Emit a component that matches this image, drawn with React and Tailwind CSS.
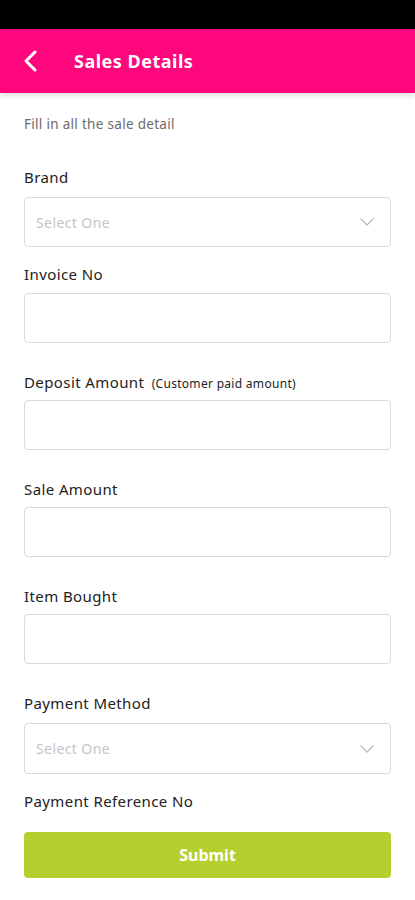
import React from "react";

const font = { fontFamily: '"Noto Sans", "Open Sans", sans-serif' };

function Chevron() {
  return (
    <svg width="18" height="18" viewBox="0 0 24 24" fill="none" stroke="#b8b8b8" strokeWidth="1.6" strokeLinecap="round" strokeLinejoin="round">
      <path d="M4 8l8 8 8-8" />
    </svg>
  );
}

function Select({ className }) {
  return (
    <div className={`flex items-center justify-between h-[50px] border border-[#d9d9d9] rounded-[4px] pl-[11px] pr-[14px] ${className}`}>
      <span className="text-[14px] tracking-[0.4px] text-[#c4c4c4]">Select One</span>
      <Chevron />
    </div>
  );
}

function Input({ className }) {
  return <div className={`h-[50px] border border-[#d9d9d9] rounded-[4px] ${className}`} />;
}

function Label({ children, className }) {
  return <div className={`h-[20px] leading-[20px] text-[15px] tracking-[0.4px] text-[#222] ${className}`}>{children}</div>;
}

export default function App() {
  return (
    <div className="w-[415px] h-[900px] bg-white overflow-hidden" style={font}>
      <div className="h-[29px] bg-black" />
      <div className="h-[64px] bg-[#ff077c] flex items-center shadow-[0_3px_6px_rgba(0,0,0,0.12)] relative">
        <div className="w-[74px] pl-[20px] flex items-center">
          <svg width="22" height="24" viewBox="0 0 22 24" fill="none" stroke="white" strokeWidth="3" strokeLinecap="round" strokeLinejoin="round">
            <path d="M15 3L6 12l9 9" />
          </svg>
        </div>
        <span className="text-white font-bold text-[18px] tracking-[0.5px]">Sales Details</span>
      </div>
      <div className="px-[24px]">
        <div className="mt-[21px] h-[20px] leading-[20px] text-[13.5px] tracking-[0.3px] text-[#6b6b6b]">Fill in all the sale detail</div>
        <Label className="mt-[33px]">Brand</Label>
        <Select className="mt-[10px]" />
        <Label className="mt-[17px]">Invoice No</Label>
        <Input className="mt-[9px]" />
        <Label className="mt-[29px]">
          Deposit Amount <span className="text-[12px] tracking-[0.3px] ml-[3px]">(Customer paid amount)</span>
        </Label>
        <Input className="mt-[8px]" />
        <Label className="mt-[29px]">Sale Amount</Label>
        <Input className="mt-[8px]" />
        <Label className="mt-[29px]">Item Bought</Label>
        <Input className="mt-[8px]" />
        <Label className="mt-[29px]">Payment Method</Label>
        <Select className="mt-[10px] h-[51px]" />
        <Label className="mt-[17px]">Payment Reference No</Label>
        <div className="mt-[21px] h-[46px] rounded-[4px] bg-[#b5cf2e] flex items-center justify-center text-white font-bold text-[16px]">
          Submit
        </div>
      </div>
    </div>
  );
}
